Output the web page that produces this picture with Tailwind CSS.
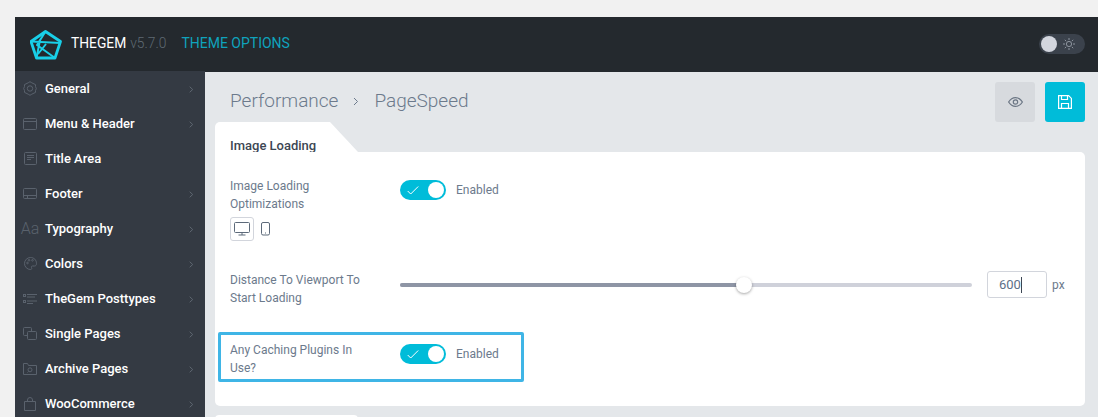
<!DOCTYPE html>
<html lang="en">
<head>
<meta charset="UTF-8" />
<title>TheGem Theme Options</title>
<script src="https://cdn.jsdelivr.net/npm/@tailwindcss/browser@4"></script>
</head>
<body class="bg-[#f1f1f1] font-['Roboto',sans-serif] h-[417px] overflow-hidden">
<div class="pt-[17px] pl-[15px] h-[417px] overflow-hidden">
    <!-- Top bar -->
    <div class="h-[55px] bg-[#24292e] flex items-center pl-[15px] pr-[13px]">
        <svg width="32" height="30" viewBox="0 0 32 30" fill="none" stroke="#19cfe8" stroke-linejoin="round" class="mr-[9px] mt-[1px]">
            <path d="M15.500 1.500 L30.500 11.500 L25 28 L6.500 28 L1 11.500 Z" stroke-width="2.800"/>
            <path d="M15.500 1.500 L7 15 L25 28 M1 11.500 L30.500 13 M6.500 28 L10 10 M8 24 L16 14" stroke-width="2"/>
        </svg>
        <div class="-mt-[2px] flex items-center text-[13.8px]">
            <span class="font-normal text-white">THEGEM</span>
            <span class="font-light text-[#5f6973] ml-[4px]">v5.7.0</span>
            <span class="text-[14px] text-[#0fa3bd] ml-[15px]">THEME OPTIONS</span>
        </div>
        <div class="ml-auto w-[46px] h-[20px] rounded-full bg-[#3b424c] flex items-center pl-[2px] -mt-[1px]">
            <span class="w-[16px] h-[16px] rounded-full bg-[#d3d6de]"></span>
            <svg width="12" height="12" viewBox="0 0 12 12" fill="none" stroke="#8d949e" class="ml-[6px]">
                <circle cx="6" cy="6" r="2.600"/>
                <path d="M6 0v2M6 10v2M0 6h2M10 6h2M1.800 1.800l1.400 1.400M8.800 8.800l1.400 1.400M1.800 10.200l1.400-1.400M8.800 3.200l1.400-1.400"/>
            </svg>
        </div>
    </div>

    <div class="flex h-[345px]">
        <!-- Sidebar -->
        <ul class="w-[190px] bg-[#343a43] shrink-0 -mt-px relative text-[13px] font-medium text-white">
            <li class="h-[35px] flex items-center">
                <span class="w-[30px] flex justify-center">
                    <svg width="14" height="15" viewBox="0 0 14 15" fill="none" stroke="#5a626d"><path d="M7 .7 L8.800 1.800 L12.500 3.600 L12.500 5.500 L13.300 7.500 L12.500 9.500 L12.500 11.400 L8.800 13.200 L7 14.300 L5.200 13.200 L1.500 11.400 L1.500 9.500 L.7 7.500 L1.500 5.500 L1.500 3.600 L5.200 1.800 Z"/><circle cx="7" cy="7.500" r="2.700"/></svg>
                </span>
                <span>General</span>
                <svg width="5" height="7" viewBox="0 0 5 7" fill="none" stroke="#5f6771" class="ml-auto mr-[11px] mt-[2px]"><path d="M.7.7l3 2.800-3 2.800"/></svg>
            </li>
            <li class="h-[35px] flex items-center">
                <span class="w-[30px] flex justify-center">
                    <svg width="14" height="12" viewBox="0 0 14 12" fill="none" stroke="#5a626d"><rect x=".5" y=".5" width="13" height="11" rx="1"/><path d="M.5 3.500h13"/></svg>
                </span>
                <span>Menu &amp; Header</span>
                <svg width="5" height="7" viewBox="0 0 5 7" fill="none" stroke="#5f6771" class="ml-auto mr-[11px] mt-[2px]"><path d="M.7.7l3 2.800-3 2.800"/></svg>
            </li>
            <li class="h-[35px] flex items-center">
                <span class="w-[30px] flex justify-center">
                    <svg width="13" height="13" viewBox="0 0 13 13" fill="none" stroke="#5a626d"><rect x=".5" y=".5" width="12" height="12" rx="1"/><path d="M3 3.500h7M3 5.500h7M3 7.500h4"/></svg>
                </span>
                <span>Title Area</span>
            </li>
            <li class="h-[35px] flex items-center">
                <span class="w-[30px] flex justify-center">
                    <svg width="14" height="11" viewBox="0 0 14 11" fill="none" stroke="#5a626d"><rect x=".5" y=".5" width="13" height="10" rx="1"/><path d="M.5 7.500h13M4.500 7.500v3"/></svg>
                </span>
                <span>Footer</span>
                <svg width="5" height="7" viewBox="0 0 5 7" fill="none" stroke="#5f6771" class="ml-auto mr-[11px] mt-[2px]"><path d="M.7.7l3 2.800-3 2.800"/></svg>
            </li>
            <li class="h-[35px] flex items-center">
                <span class="w-[30px] flex justify-center text-[16px] font-light text-[#5a626d]">Aa</span>
                <span>Typography</span>
                <svg width="5" height="7" viewBox="0 0 5 7" fill="none" stroke="#5f6771" class="ml-auto mr-[11px] mt-[2px]"><path d="M.7.7l3 2.800-3 2.800"/></svg>
            </li>
            <li class="h-[35px] flex items-center">
                <span class="w-[30px] flex justify-center">
                    <svg width="13" height="13" viewBox="0 0 13 13" fill="none" stroke="#5a626d"><path d="M6.500.5a6 6 0 1 0 0 12c1.400 0 1.400-1.100 1-1.900-.4-.9.1-1.600 1-1.600h2c1.300 0 2-1 2-2.500C12.500 3 10 .5 6.500.5Z"/><circle cx="3.500" cy="6" r=".8"/><circle cx="5" cy="3.300" r=".8"/><circle cx="8.500" cy="3.300" r=".8"/></svg>
                </span>
                <span>Colors</span>
                <svg width="5" height="7" viewBox="0 0 5 7" fill="none" stroke="#5f6771" class="ml-auto mr-[11px] mt-[2px]"><path d="M.7.7l3 2.800-3 2.800"/></svg>
            </li>
            <li class="h-[35px] flex items-center">
                <span class="w-[30px] flex justify-center">
                    <svg width="14" height="10" viewBox="0 0 14 10" fill="none" stroke="#5a626d"><path d="M4 .5h10M4 3h8M4 7h10M4 9.500h6"/><rect x=".5" y=".5" width="2" height="2"/><rect x=".5" y="6.500" width="2" height="2"/></svg>
                </span>
                <span>TheGem Posttypes</span>
                <svg width="5" height="7" viewBox="0 0 5 7" fill="none" stroke="#5f6771" class="ml-auto mr-[11px] mt-[2px]"><path d="M.7.7l3 2.800-3 2.800"/></svg>
            </li>
            <li class="h-[35px] flex items-center">
                <span class="w-[30px] flex justify-center">
                    <svg width="14" height="13" viewBox="0 0 14 13" fill="none" stroke="#5a626d"><path d="M4 8.500H1.500a1 1 0 0 1-1-1v-6a1 1 0 0 1 1-1h6a1 1 0 0 1 1 1V4"/><rect x="4.500" y="4.500" width="9" height="8" rx="1"/></svg>
                </span>
                <span>Single Pages</span>
                <svg width="5" height="7" viewBox="0 0 5 7" fill="none" stroke="#5f6771" class="ml-auto mr-[11px] mt-[2px]"><path d="M.7.7l3 2.800-3 2.800"/></svg>
            </li>
            <li class="h-[35px] flex items-center">
                <span class="w-[30px] flex justify-center">
                    <svg width="14" height="12" viewBox="0 0 14 12" fill="none" stroke="#5a626d"><path d="M.5 11.500V.5h4l1 2h8v9Z"/><circle cx="7" cy="6.800" r="2"/><path d="M5.500 8.500l-1 1"/></svg>
                </span>
                <span>Archive Pages</span>
                <svg width="5" height="7" viewBox="0 0 5 7" fill="none" stroke="#5f6771" class="ml-auto mr-[11px] mt-[2px]"><path d="M.7.7l3 2.800-3 2.800"/></svg>
            </li>
            <li class="h-[35px] flex items-center">
                <span class="w-[30px] flex justify-center">
                    <svg width="12" height="14" viewBox="0 0 12 14" fill="none" stroke="#5a626d"><path d="M.5 4.500h11v9H.5Z"/><path d="M3.500 4.500V3a2.500 2.500 0 0 1 5 0v1.500"/></svg>
                </span>
                <span>WooCommerce</span>
                <svg width="5" height="7" viewBox="0 0 5 7" fill="none" stroke="#5f6771" class="ml-auto mr-[11px] mt-[2px]"><path d="M.7.7l3 2.800-3 2.800"/></svg>
            </li>
        </ul>

        <!-- Main -->
        <div class="flex-1 bg-[#e4e7ea] pl-[10px] pr-[13px] relative">
            <div class="h-[50px] flex items-start pl-[15px] text-[19px] font-light text-[#6c7a8c]">
                <div class="flex items-center h-[28px] mt-[15px]">
                    <span>Performance</span>
                    <svg width="6" height="9" viewBox="0 0 6 9" fill="none" stroke="#6c7a8c" class="ml-[15px] mr-[15px] mt-[1px]"><path d="M1 1l3.500 3.500L1 8"/></svg>
                    <span>PageSpeed</span>
                </div>
                <div class="ml-auto flex gap-[10px] mt-[10px]">
                    <div class="w-[40px] h-[40px] rounded-[3px] bg-[#d7dade] flex items-center justify-center">
                        <svg width="15" height="10" viewBox="0 0 15 10" fill="none" stroke="#6b7684" stroke-width="1.200"><path d="M.6 5C2.500 2 4.800.6 7.500.6S12.500 2 14.400 5C12.500 8 10.200 9.400 7.500 9.400S2.500 8 .6 5Z"/><circle cx="7.500" cy="5" r="2.200"/></svg>
                    </div>
                    <div class="w-[40px] h-[40px] rounded-[3px] bg-[#00bcd9] flex items-center justify-center">
                        <svg width="14" height="14" viewBox="0 0 14 14" fill="none" stroke="#fff" stroke-width="1.200"><path d="M.6.6h10l2.800 2.800v10H.6Z"/><path d="M3.500.6v3.900h6V.6M3.500 13.400V8.500h7v4.900"/></svg>
                    </div>
                </div>
            </div>

            <!-- Tab -->
            <div class="flex h-[30px]">
                <div class="w-[115px] bg-white rounded-tl-[5px] pl-[15px] pt-[16px] text-[13px] leading-[15px] font-medium text-[#3c4653]">Image&nbsp;Loading</div>
                <svg width="28" height="30" viewBox="0 0 28 30"><path d="M0 0 L28 30 L0 30 Z" fill="#fff"/></svg>
            </div>

            <!-- Card -->
            <div class="bg-white rounded-b-[5px] rounded-tr-[5px] h-[254px] pl-[15px] pt-[25px] pr-[20px] text-[12px] leading-[18px] text-[#6c7a8c] relative">
                <div class="flex h-[94px]">
                    <div class="w-[170px] shrink-0">
                        <div>Image Loading<br>Optimizations</div>
                        <div class="flex items-center mt-[4px]">
                            <span class="w-[24px] h-[24px] border border-[#d2d5dc] rounded-[3px] flex items-center justify-center">
                                <svg width="16" height="14" viewBox="0 0 16 14" fill="none" stroke="#5d6a7a"><rect x=".5" y=".5" width="15" height="10" rx="1"/><path d="M8 10.500v2.500M4.500 13h7"/></svg>
                            </span>
                            <svg width="10" height="14" viewBox="0 0 10 14" fill="none" stroke="#5d6a7a" class="ml-[7px]"><rect x=".5" y=".5" width="8" height="12.500" rx="1.500"/><path d="M4 11h1"/></svg>
                        </div>
                    </div>
                    <div class="flex items-center h-[20px] mt-[3px]">
                        <span class="w-[46px] h-[20px] rounded-full bg-[#00bcd9] flex items-center pl-[7px] pr-[2px]">
                            <svg width="12" height="9" viewBox="0 0 12 9" fill="none" stroke="#fff"><path d="M.7 5l3 3 7.500-7.500"/></svg>
                            <span class="ml-auto w-[16px] h-[16px] rounded-full bg-white"></span>
                        </span>
                        <span class="ml-[10px]">Enabled</span>
                    </div>
                </div>

                <div class="flex h-[70px]">
                    <div class="w-[170px] shrink-0">Distance To Viewport To<br>Start Loading</div>
                    <div class="flex-1 flex items-center h-[27px]">
                        <div class="w-[572px] h-[4px] rounded-full bg-[#cfd1da] relative">
                            <div class="w-[344px] h-[4px] rounded-full bg-[#8e95a5]"></div>
                            <span class="absolute left-[336px] -top-[6px] w-[16px] h-[16px] rounded-full bg-white shadow-[0_1px_3px_rgba(0,0,0,0.35)]"></span>
                        </div>
                        <div class="ml-[15px] w-[60px] h-[27px] border border-[#d2d5dc] rounded-[3px] pl-[11px] flex items-center text-[#5d7088] text-[13px]">
                            <span>600</span><span class="w-px h-[16px] bg-[#3c4653]"></span>
                        </div>
                        <span class="ml-[5px]">px</span>
                    </div>
                </div>

                <div class="flex">
                    <div class="w-[170px] shrink-0">Any Caching Plugins In<br>Use?</div>
                    <div class="flex items-center h-[20px] mt-[3px]">
                        <span class="w-[46px] h-[20px] rounded-full bg-[#00bcd9] flex items-center pl-[7px] pr-[2px]">
                            <svg width="12" height="9" viewBox="0 0 12 9" fill="none" stroke="#fff"><path d="M.7 5l3 3 7.500-7.500"/></svg>
                            <span class="ml-auto w-[16px] h-[16px] rounded-full bg-white"></span>
                        </span>
                        <span class="ml-[10px]">Enabled</span>
                    </div>
                </div>

                <!-- Highlight box drawn over the row -->
                <div class="absolute left-[3px] top-[180px] w-[306px] h-[50px] border-[3px] border-[#3fb5e6] rounded-[2px]"></div>
            </div>

            <!-- Next tab peeking in -->
            <div class="w-[143px] h-[4px] bg-white rounded-t-[5px] mt-[9px]"></div>
        </div>
    </div>
</div>
</body>
</html>
